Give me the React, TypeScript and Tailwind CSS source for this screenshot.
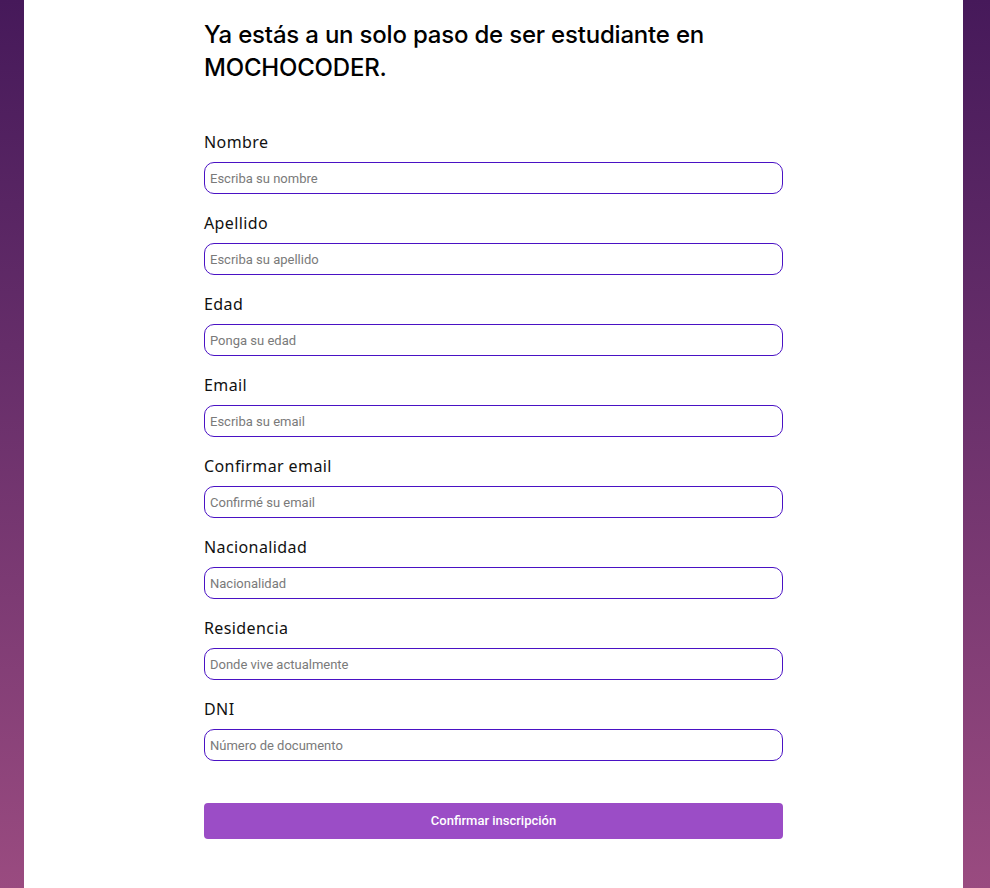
const fields = [
  { label: "Nombre", placeholder: "Escriba su nombre" },
  { label: "Apellido", placeholder: "Escriba su apellido" },
  { label: "Edad", placeholder: "Ponga su edad" },
  { label: "Email", placeholder: "Escriba su email" },
  { label: "Confirmar email", placeholder: "Confirmé su email" },
  { label: "Nacionalidad", placeholder: "Nacionalidad" },
  { label: "Residencia", placeholder: "Donde vive actualmente" },
  { label: "DNI", placeholder: "Número de documento" },
];

export default function App() {
  return (
    <div className="min-h-screen flex bg-gradient-to-b from-[#46195a] to-[#9a4b80] pl-[24px] pr-[27px]">
      <div className="flex-1 bg-white pl-[180px] pt-[18px] pb-[50px]">
        <div className="w-[579px]">
          <h1 className="text-[24px] leading-[33px] font-medium tracking-[-0.2px] text-black font-['Inter',sans-serif]">
            Ya estás a un solo paso de ser estudiante en MOCHOCODER.
          </h1>
          <form className="mt-[46px] flex flex-col gap-[17px]">
            {fields.map((f) => (
              <div key={f.label} className="flex flex-col gap-[8px]">
                <label className="text-[16px] leading-[24px] tracking-[0.4px] text-[#111] font-['Noto_Sans',sans-serif]">
                  {f.label}
                </label>
                <input
                  type="text"
                  placeholder={f.placeholder}
                  className="h-[32px] w-full rounded-[10px] border border-[#4a12c4] px-[5px] text-[13px] font-['Roboto',sans-serif] placeholder:text-[#7a7a7a] outline-none"
                />
              </div>
            ))}
            <button
              type="button"
              className="mt-[25px] h-[36px] w-full rounded-[4px] bg-[#9b4dc6] text-[13px] font-medium text-white font-['Roboto',sans-serif]"
            >
              Confirmar inscripción
            </button>
          </form>
        </div>
      </div>
    </div>
  );
}
